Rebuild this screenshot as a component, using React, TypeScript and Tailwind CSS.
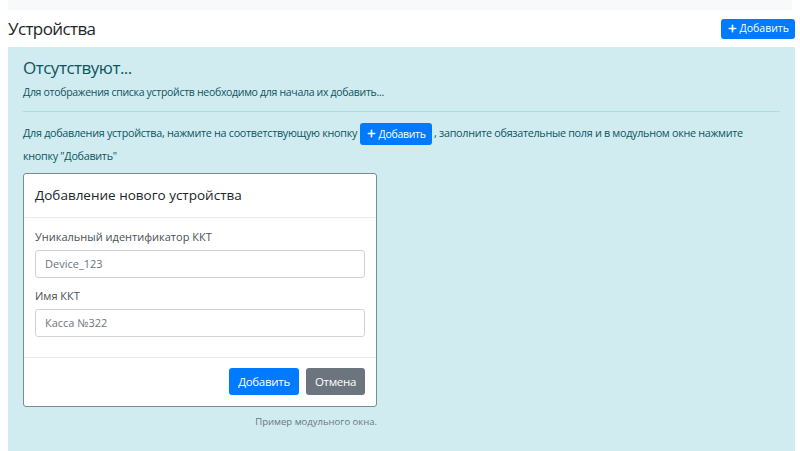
import { Plus } from 'lucide-react';

function AddBtn({ small }: { small?: boolean }) {
  return (
    <span className={`inline-flex items-center gap-[2px] bg-[#007bff] text-white rounded-[3px] align-middle leading-none ${small ? 'h-[22px] px-[6px] text-[10.5px]' : 'h-[20px] px-[6px] text-[10.5px]'}`}>
      <Plus size={11} strokeWidth={3.5} />
      Добавить
    </span>
  );
}

export default function App() {
  return (
    <div className="w-[800px] h-[451px] overflow-hidden bg-white text-[#212529]" style={{ fontFamily: '"Open Sans", "DejaVu Sans", sans-serif' }}>
      <div className="mx-[8px] h-[10px] bg-[#f8f9fa]" />
      <div className="flex items-center justify-between pl-[8px] pr-[5px] h-[37px]">
        <h1 className="text-[17px] tracking-[-0.6px] text-[#212529]">Устройства</h1>
        <AddBtn />
      </div>
      <div className="ml-[8px] mr-[5px] h-[404px] bg-[#d1ecf1] text-[#0c5460] px-[15px] pt-[10px]">
        <div className="text-[17px] tracking-[-0.5px] leading-[22px]">Отсутствуют...</div>
        <p className="text-[10.5px] mt-[6px] tracking-[-0.3px]">Для отображения списка устройств необходимо для начала их добавить...</p>
        <div className="border-t border-[#abdde5] mt-[10px] mb-[10px]" />
        <p className="text-[10.8px] leading-[22px] tracking-[-0.3px]">
          Для добавления устройства, нажмите на соответствующую кнопку <AddBtn small /> , заполните обязательные поля и в модульном окне нажмите кнопку "Добавить"
        </p>
        <div className="w-[354px] mt-[6px]">
          <div className="bg-white border border-[#7f8a8e] rounded-[3px] text-[#212529]">
            <div className="h-[44px] flex items-center px-[11px] border-b border-[#e9ecef] text-[13.5px]">Добавление нового устройства</div>
            <div className="px-[11px] pt-[11px] pb-[20px] text-[11px] text-[#495057]">
              <div className="mb-[5px] leading-[16px]">Уникальный идентификатор ККТ</div>
              <div className="h-[28px] border border-[#ced4da] rounded-[3px] flex items-center px-[9px] text-[#6c757d]">Device_123</div>
              <div className="mt-[10px] mb-[5px] leading-[16px]">Имя ККТ</div>
              <div className="h-[28px] border border-[#ced4da] rounded-[3px] flex items-center px-[9px] text-[#6c757d]">Касса №322</div>
            </div>
            <div className="border-t border-[#e9ecef] h-[49px] flex items-center justify-end gap-[7px] px-[11px] text-[11.5px] tracking-[-0.3px]">
              <span className="h-[27px] px-[9px] flex items-center bg-[#007bff] text-white rounded-[3px]">Добавить</span>
              <span className="h-[27px] px-[9px] flex items-center bg-[#6c757d] text-white rounded-[3px]">Отмена</span>
            </div>
          </div>
          <div className="text-right text-[9.5px] text-[#6c757d] mt-[8px]">Пример модульного окна.</div>
        </div>
      </div>
    </div>
  );
}
